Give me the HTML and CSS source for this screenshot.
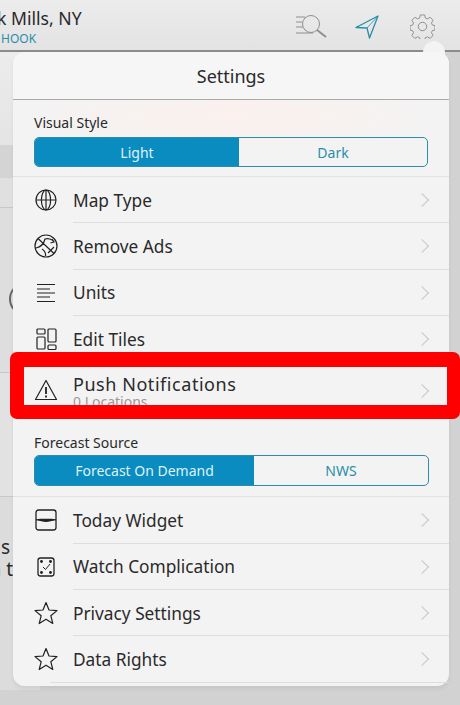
FILE: index.html
```html
<!DOCTYPE html>
<html lang="en">
  <head>
    <meta charset="UTF-8" />
    <meta name="viewport" content="width=device-width, initial-scale=1.0" />
    <title>Settings</title>
    <link rel="stylesheet" href="styles.css">
  </head>
  <body>
    <div class="screen">
      <header class="topbar">
        <div class="place">
          <div class="place-name">k Mills, NY</div>
          <div class="place-sub">HOOK</div>
        </div>
        <div class="topbar-icons">
          <svg class="icon-search" width="33" height="24" viewBox="0 0 33 24" fill="none" stroke="#8f8f8f" stroke-width="1">
            <path d="M1 3h9M1 8h6M1 13h7M1 19h17" />
            <circle cx="16" cy="10" r="8.500" />
            <path d="M22 16l9 7" stroke-width="2" />
          </svg>
          <svg class="icon-locate" width="25" height="25" viewBox="0 0 25 25" fill="none" stroke="#2a8ea8" stroke-width="1.300">
            <path d="M23 2L1 13.500l11 .5 2.500 10z" stroke-linejoin="round" />
            <path d="M23 2L12 14" stroke-width=".8" />
          </svg>
          <svg class="icon-gear" width="25" height="25" viewBox="0 0 26 26" fill="none" stroke="#8d8d8d" stroke-width="1">
            <path d="M10.800 1h4.400l.8 3.200 2 .9 2.900-1.700 3.100 3.100-1.700 2.900.9 2 2.800.8v4.400l-2.800.8-.9 2 1.700 2.900-3.100 3.100-2.900-1.700-2 .9-.8 2.800h-4.400l-.8-2.800-2-.9-2.900 1.700-3.100-3.100 1.700-2.900-.9-2-2.800-.8v-4.400l2.800-.8.9-2-1.700-2.900 3.100-3.100 2.900 1.700 2-.9z" stroke-linejoin="round" />
            <circle cx="13" cy="13" r="4.400" />
          </svg>
        </div>
      </header>

      <div class="backdrop">
        <div class="back-row back-a"></div>
        <div class="back-row back-b"></div>
        <div class="back-row back-c"></div>
        <div class="back-row back-d"><span class="back-arc"></span></div>
        <div class="back-row back-e"></div>
        <div class="back-row back-f">
          <span class="back-text back-text-s">s</span>
          <span class="back-text">n t</span>
        </div>
      </div>

      <div class="popover">
        <span class="popover-tip"></span>
        <h1 class="popover-title">Settings</h1>

        <section class="group">
          <h2>Visual Style</h2>
          <div class="segmented">
            <div class="seg seg-on seg-light">Light</div>
            <div class="seg seg-rest">Dark</div>
          </div>
        </section>

        <ul class="rows">
          <li class="row">
            <svg class="row-icon" viewBox="0 0 24 24" fill="none" stroke="#222" stroke-width="1.200">
              <circle cx="12" cy="12" r="10" />
              <ellipse cx="12" cy="12" rx="4.600" ry="10" />
              <path d="M12 2v20M2 12h20" />
            </svg>
            <span class="row-label">Map Type</span>
            <span class="chevron"></span>
          </li>
          <li class="row">
            <svg class="row-icon" viewBox="0 0 24 24" fill="none" stroke="#222" stroke-width="1.200">
              <circle cx="12" cy="12" r="11" />
              <path d="M4 4.500l16 15M2 14c5-1 8-5 9-9 3-1 7 0 9 3M18 5l2 3-3.500 1M8 15c2 1 4 4 3.500 7M20 13l-6 6" />
            </svg>
            <span class="row-label">Remove Ads</span>
            <span class="chevron"></span>
          </li>
          <li class="row">
            <svg class="row-icon" viewBox="0 0 24 24" fill="none" stroke="#222" stroke-width="1.200">
              <path d="M3 3.500h18M3 8h13M3 12h18M3 16h13M3 20.500h18" />
            </svg>
            <span class="row-label">Units</span>
            <span class="chevron"></span>
          </li>
          <li class="row">
            <svg class="row-icon" viewBox="0 0 24 24" fill="none" stroke="#222" stroke-width="1.200">
              <rect x="3" y="2" width="8" height="5" rx="1" />
              <rect x="3" y="10" width="8" height="12" rx="1" />
              <rect x="14" y="2" width="8" height="13" rx="1" />
              <rect x="14" y="18" width="8" height="4.500" rx="1" />
            </svg>
            <span class="row-label">Edit Tiles</span>
            <span class="chevron"></span>
          </li>
          <li class="row row-tall">
            <svg class="row-icon" viewBox="0 0 24 24" fill="none" stroke="#222" stroke-width="1.200">
              <path d="M12 2.500L1.500 21.500h21z" stroke-linejoin="round" />
              <path d="M12 9v7M12 17.500v2" stroke-width="1.800" />
            </svg>
            <div class="row-text">
              <span class="row-label row-label-wide">Push Notifications</span>
              <span class="row-sub">0 Locations</span>
            </div>
            <span class="chevron"></span>
          </li>
        </ul>

        <section class="group group-forecast">
          <h2>Forecast Source</h2>
          <div class="segmented">
            <div class="seg seg-on seg-wide">Forecast On Demand</div>
            <div class="seg seg-rest">NWS</div>
          </div>
        </section>

        <ul class="rows">
          <li class="row">
            <svg class="row-icon" viewBox="0 0 24 24" fill="none" stroke="#222" stroke-width="1.300">
              <rect x="2" y="2" width="20" height="20" rx="2.500" />
              <path d="M2 11.200c6-.6 14-.6 20 0v1c-4 .3-7 1.800-10 1.800s-6-1.500-10-1.800z" fill="#222" stroke="none" />
            </svg>
            <span class="row-label">Today Widget</span>
            <span class="chevron"></span>
          </li>
          <li class="row">
            <svg class="row-icon" viewBox="0 0 24 24" fill="none" stroke="#222" stroke-width="1.300">
              <rect x="4" y="3" width="16" height="18" rx="2.500" />
              <circle cx="7.500" cy="6.500" r=".8" fill="#222" />
              <circle cx="16.500" cy="6.500" r=".8" fill="#222" />
              <circle cx="7.500" cy="17.500" r=".8" fill="#222" />
              <circle cx="16.500" cy="17.500" r=".8" fill="#222" />
              <path d="M9 12l2.500 2.500L16 9" stroke-width="1" />
            </svg>
            <span class="row-label">Watch Complication</span>
            <span class="chevron"></span>
          </li>
          <li class="row">
            <svg class="row-icon" viewBox="0 0 24 24" fill="none" stroke="#222" stroke-width="1.200">
              <path d="M12 1.500l3 7.500 8 .6-6.200 5.100 2 7.800L12 18.200l-6.800 4.300 2-7.800L1 9.600 9 9z" stroke-linejoin="round" />
            </svg>
            <span class="row-label">Privacy Settings</span>
            <span class="chevron"></span>
          </li>
          <li class="row">
            <svg class="row-icon" viewBox="0 0 24 24" fill="none" stroke="#222" stroke-width="1.200">
              <path d="M12 1.500l3 7.500 8 .6-6.200 5.100 2 7.800L12 18.200l-6.800 4.300 2-7.800L1 9.600 9 9z" stroke-linejoin="round" />
            </svg>
            <span class="row-label">Data Rights</span>
            <span class="chevron"></span>
          </li>
        </ul>
      </div>

      <div class="callout"></div>
    </div>
  </body>
</html>
```

FILE: styles.css
```css
* {
  box-sizing: border-box;
}

body {
  margin: 0;
  font-family: "Noto Sans", Arial, sans-serif;
  color: #2a2a2a;
}

.screen {
  position: relative;
  width: 460px;
  height: 705px;
  overflow: hidden;
  background-color: #d2d2d2;
}

/* top bar */
.topbar {
  display: flex;
  justify-content: space-between;
  height: 52px;
  padding-right: 25px;
  background: linear-gradient(#ececec, #e3e3e3);
  border-bottom: 2px solid #8c8c8c;
}

.place-name {
  margin: 5px 0 0 -3px;
  font-size: 17.600px;
  line-height: 26px;
}

.place-sub {
  margin-left: 1px;
  font-size: 12px;
  line-height: 16px;
  color: #2a8ea8;
}

.topbar-icons {
  display: flex;
  align-items: center;
  padding-top: 2px;
}

.icon-search {
  margin-right: 27px;
}

.icon-locate {
  margin-right: 30px;
}

/* what shows beside the popover */
.backdrop {
  display: flex;
  flex-direction: column;
  width: 40px;
  height: 638px;
}

.back-row {
  position: relative;
  border-bottom: 1px solid #c8c8c8;
}

.back-a {
  height: 93px;
  background: linear-gradient(#ececec, #e4e4e4);
  border-bottom: none;
}

.back-b {
  height: 33px;
  background-color: #d4d4d4;
  border-bottom: none;
}

.back-c {
  height: 30px;
  background-color: #e0e0e0;
}

.back-d {
  height: 165px;
  background-color: #dedede;
}

.back-e {
  height: 124px;
  background-color: #e2e2e2;
}

.back-f {
  flex: 1;
  display: flex;
  flex-direction: column;
  padding-top: 39px;
  background-color: #dcdcdc;
  border-bottom: none;
}

.back-text {
  align-self: flex-end;
  margin-right: 27px;
  font-size: 19px;
  line-height: 22px;
  white-space: nowrap;
}

.back-text-s {
  margin-right: 30px;
}

.back-arc {
  position: absolute;
  left: 9px;
  top: 75px;
  width: 30px;
  height: 32px;
  border: 2px solid #666;
  border-radius: 50%;
}

/* settings popover */
.popover {
  position: absolute;
  left: 13px;
  top: 52px;
  width: 436px;
  height: 634px;
  border-radius: 12px;
  background: radial-gradient(ellipse 210px 36px at 50% 64px, #fbf0ec, rgba(251, 240, 236, 0) 100%), #f3f3f3;
  box-shadow: 0 3px 4px rgba(0, 0, 0, 0.06);
}

.popover-tip {
  position: absolute;
  left: 410px;
  top: -11px;
  width: 22px;
  height: 24px;
  border-radius: 50% 50% 0 0;
  background-color: #f3f3f3;
}

.popover-title {
  position: relative;
  margin: 0;
  height: 48px;
  border-bottom: 1px solid #aaa;
  font-size: 18px;
  font-weight: 400;
  line-height: 48px;
  text-align: center;
  background-color: #f6f6f6;
  border-radius: 12px 12px 0 0;
}

.group {
  height: 77px;
  padding: 14px 21px 0;
  border-bottom: 1px solid #e2e2e2;
}

.group h2 {
  margin: 0 0 5px;
  font-size: 14px;
  font-weight: 400;
  line-height: 18px;
}

.segmented {
  display: flex;
  height: 30px;
  border: 1px solid #2a8ea8;
  border-radius: 5px;
  overflow: hidden;
  font-size: 14px;
  color: #2a8ea8;
}

.seg {
  display: flex;
  align-items: center;
  justify-content: center;
}

.seg-on {
  background-color: #0a8cc0;
  color: #dff2f8;
}

.seg-light {
  width: 204px;
}

.seg-wide {
  width: 219px;
}

.seg-rest {
  flex: 1;
}

.group-forecast {
  height: 82px;
  padding-top: 19px;
}

.group-forecast .segmented {
  height: 31px;
  margin-right: -1px;
}

.group-forecast h2 {
  margin-bottom: 3px;
}

.rows {
  margin: 0;
  padding: 0;
  list-style: none;
}

.row {
  display: flex;
  align-items: center;
  position: relative;
  height: 46.330px;
  padding: 0 19px 0 21px;
}

.row::after {
  content: "";
  position: absolute;
  left: 60px;
  right: 0;
  bottom: 0;
  height: 1px;
  background-color: #dedede;
}

.row:last-child::after {
  left: 37px;
}

.row-tall {
  height: 53px;
  align-items: flex-start;
  padding-top: 11px;
}

.row-tall::after {
  display: none;
}

.row-tall .row-icon {
  margin-top: 5px;
}

.row-icon {
  width: 24px;
  height: 24px;
  flex: none;
  margin-right: 15px;
}

.row-label {
  flex: 1;
  padding-top: 1px;
  font-size: 17.300px;
  line-height: 24px;
}

.row-label-wide {
  display: block;
  padding-top: 0;
  font-size: 18px;
  line-height: 22px;
  letter-spacing: 0.55px;
}

.row-text {
  flex: 1;
}

.row-sub {
  display: block;
  margin-top: 1px;
  font-size: 14px;
  line-height: 12px;
  color: #999;
}

.chevron {
  flex: none;
  width: 10px;
  height: 10px;
  margin-right: 3px;
  border-top: 1.500px solid #c8c8c8;
  border-right: 1.500px solid #c8c8c8;
  transform: rotate(45deg);
}

.row-tall .chevron {
  margin-top: 13px;
}

/* red highlight drawn over the screenshot */
.callout {
  position: absolute;
  left: 10px;
  top: 352px;
  width: 450px;
  height: 67px;
  border: solid #fe0000;
  border-width: 15px 13px 14px 14px;
  border-radius: 7px;
}
```
